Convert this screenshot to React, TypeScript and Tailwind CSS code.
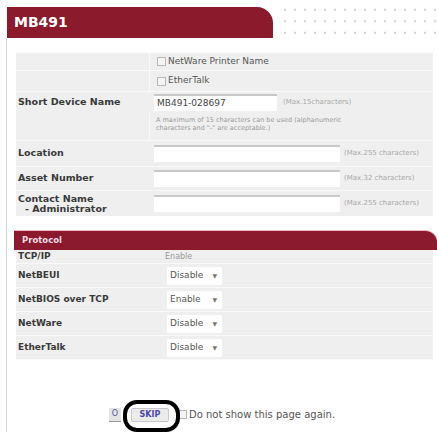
const font = { fontFamily: '"DejaVu Sans", Verdana, sans-serif' };

function Check() {
  return <span className="inline-block h-[9px] w-[9px] border border-[#b8b8b8] bg-[#f4f4f4]" />;
}

function TextInput({ width, value }: { width: string; value?: string }) {
  return (
    <div
      className={`${width} flex h-[17px] items-center border-t-2 border-t-[#c8c8c8] bg-white pl-[3px] text-[9px] text-[#444]`}
    >
      {value}
    </div>
  );
}

function Limit({ children }: { children: string }) {
  return <span className="text-[7px] text-[#a8a8a8]">{children}</span>;
}

function Select({ value }: { value: string }) {
  return (
    <div className="flex h-[18px] w-[55px] items-center justify-between bg-white pl-[3px] pr-[5px] text-[9px] text-[#555]">
      <span>{value}</span>
      <span className="text-[6px] text-[#777]">▼</span>
    </div>
  );
}

const deviceRows = [
  { label: "Location", hint: "(Max.255 characters)", h: "h-[26px]" },
  { label: "Asset Number", hint: "(Max.32 characters)", h: "h-[24px]" },
];

const protocolRows = [
  { label: "NetBEUI", value: "Disable" },
  { label: "NetBIOS over TCP", value: "Enable" },
  { label: "NetWare", value: "Disable" },
  { label: "EtherTalk", value: "Disable" },
];

export default function App() {
  return (
    <div className="relative h-[432px] w-[437px] overflow-hidden bg-white" style={font}>
      <div className="flex pl-[7px] pt-[7px]">
        <div className="flex h-[31px] w-[266px] items-center rounded-tr-[16px] bg-[#8b1a2d] pl-[7px] text-[14px] font-bold text-white">
          MB491
        </div>
        <div className="-mt-[3px] ml-[7px] h-[34px] flex-1 bg-[radial-gradient(circle,#cfcfcf_0.7px,transparent_1px)] bg-[length:10px_11.5px]" />
      </div>

      <div className="ml-[6px] h-[394px] border-l border-[#d4d4d4] pl-[9px] pt-[15px]">
        <div className="w-[417px] bg-[#efefef] text-[#3a3a3a]">
          <div className="flex h-[18px] border-b border-[#f9f9f9]">
            <div className="w-[134px] border-r border-[#f9f9f9]" />
            <div className="flex items-center gap-[2px] pl-[7px] text-[9px] text-[#555]">
              <Check />
              NetWare Printer Name
            </div>
          </div>
          <div className="flex h-[21px] border-b border-[#f9f9f9]">
            <div className="w-[134px] border-r border-[#f9f9f9]" />
            <div className="flex items-center gap-[2px] pl-[7px] text-[9px] text-[#555]">
              <Check />
              EtherTalk
            </div>
          </div>
          <div className="flex h-[21px] items-center">
            <div className="w-[134px] pl-[2px] text-[9.5px] font-bold">Short Device Name</div>
            <div className="flex items-center gap-[6px] pl-[4px]">
              <TextInput width="w-[123px]" value="MB491-028697" />
              <Limit>(Max.15characters)</Limit>
            </div>
          </div>
          <div className="flex h-[28px] border-b border-[#f9f9f9]">
            <div className="w-[134px] border-r border-[#f9f9f9]" />
            <div className="pl-[6px] pt-[3px] text-[6.5px] leading-[8px] text-[#999]">
              A maximum of 15 characters can be used (alphanumeric
              <br />
              characters and "-" are acceptable.)
            </div>
          </div>
          {deviceRows.map((r) => (
            <div key={r.label} className={`flex ${r.h} items-center border-b border-[#f9f9f9]`}>
              <div className="w-[134px] pl-[2px] text-[9.5px] font-bold">{r.label}</div>
              <div className="flex items-center gap-[4px] pl-[4px]">
                <TextInput width="w-[186px]" />
                <Limit>{r.hint}</Limit>
              </div>
            </div>
          ))}
          <div className="flex h-[25px] items-center">
            <div className="w-[134px] pl-[2px] text-[9.5px] font-bold leading-[10px]">
              Contact Name
              <br />
              <span className="pl-[7px]">- Administrator</span>
            </div>
            <div className="flex items-center gap-[4px] pl-[4px]">
              <TextInput width="w-[186px]" />
              <Limit>(Max.255 characters)</Limit>
            </div>
          </div>
        </div>

        <div className="-ml-[2px] mt-[14px] flex h-[20px] w-[423px] items-center rounded-tr-[12px] border-t border-[#f0b8c0] bg-[#8b1a2e] pl-[8px] text-[8.5px] font-bold text-[#f4dde2]">
          Protocol
        </div>
        <div className="w-[417px] bg-[#efefef] text-[#3a3a3a]">
          <div className="flex h-[14px] items-center border-b border-[#f9f9f9]">
            <div className="w-[149px] pl-[2px] text-[9px] font-bold">TCP/IP</div>
            <div className="text-[8px] text-[#999]">Enable</div>
          </div>
          {protocolRows.map((r) => (
            <div key={r.label} className="flex h-[24px] items-center border-b border-[#f9f9f9]">
              <div className="w-[151px] pl-[2px] text-[9px] font-bold">{r.label}</div>
              <Select value={r.value} />
            </div>
          ))}
        </div>

        <div className="mt-[47px] flex items-center pl-[93px]">
          <div className="flex h-[14px] w-[12px] items-center justify-center border-b border-[#999] bg-[#e4e4e4] text-[8px] text-[#5555aa]">
            O
          </div>
          <div className="ml-[10px] flex h-[14px] w-[38px] items-center justify-center rounded-[2px] border border-[#c8c8c8] bg-[#ececec] text-[8px] font-bold text-[#4a4aa8]">
            SKIP
          </div>
          <div className="ml-[9px] flex items-center gap-[2px] text-[10px] text-[#555]">
            <Check />
            Do not show this page again.
          </div>
        </div>
      </div>

      <div className="absolute left-[123px] top-[400px] h-[32px] w-[57px] rounded-[14px] border-[4px] border-black" />
    </div>
  );
}
